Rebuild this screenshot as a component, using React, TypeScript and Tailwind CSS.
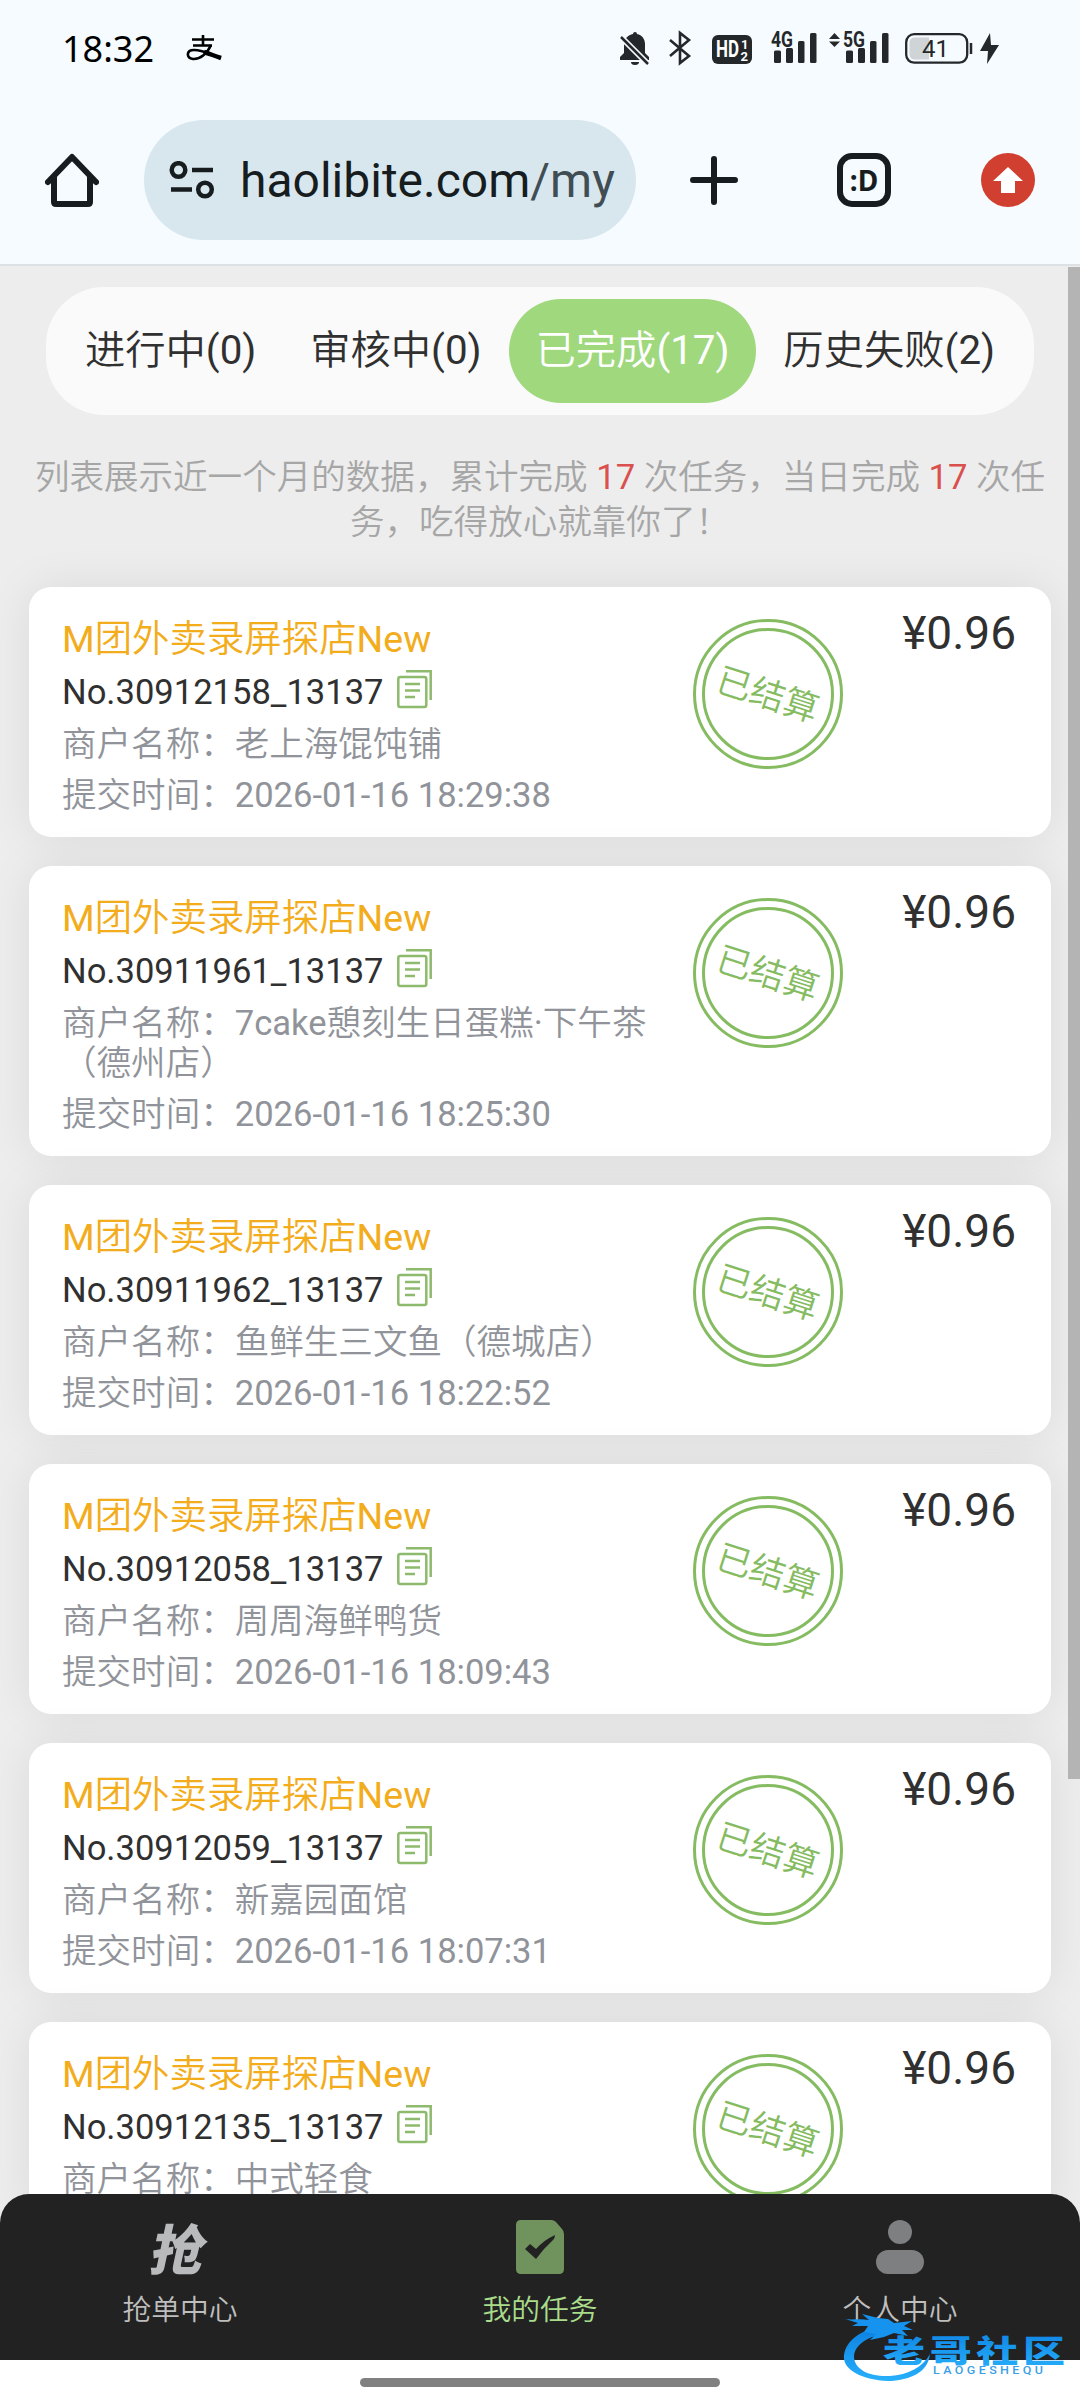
import { clsx } from "clsx";

type Task = {
  no: string;
  shop: string;
  time?: string;
};

const tabs = ["进行中(0)", "审核中(0)", "已完成(17)", "历史失败(2)"];
const activeTab = 2;

const tasks: Task[] = [
  { no: "30912158_13137", shop: "老上海馄饨铺", time: "2026-01-16 18:29:38" },
  { no: "30911961_13137", shop: "7cake憩刻生日蛋糕·下午茶（德州店）", time: "2026-01-16 18:25:30" },
  { no: "30911962_13137", shop: "鱼鲜生三文鱼（德城店）", time: "2026-01-16 18:22:52" },
  { no: "30912058_13137", shop: "周周海鲜鸭货", time: "2026-01-16 18:09:43" },
  { no: "30912059_13137", shop: "新嘉园面馆", time: "2026-01-16 18:07:31" },
  { no: "30912135_13137", shop: "中式轻食" },
];

function SignalIcon({ label }: { label: string }) {
  return (
    <svg className="overflow-visible" width="46" height="34" viewBox="0 0 46 34" fill="#25282a">
      <text x="0" y="17" fontSize="22" fontWeight="700" textLength="22" lengthAdjust="spacingAndGlyphs">
        {label}
      </text>
      <rect x="3" y="20.500" width="7" height="12.500" rx="1.500" />
      <rect x="15" y="18" width="7" height="15" rx="1.500" />
      <rect x="27" y="11" width="6.500" height="22" rx="1.500" />
      <rect x="39" y="3" width="6.500" height="30" rx="1.500" />
    </svg>
  );
}

function StatusBar() {
  return (
    <div className="flex h-[96px] items-start pt-[30px] pl-[62px] text-black">
      <span className="-mt-px w-[92px] font-['Noto_Sans','Noto_Sans_CJK_SC',sans-serif] text-[36px] leading-[40px]">
        18:32
      </span>
      <svg className="mt-[4px] ml-[32px]" width="36" height="30" viewBox="0 0 36 30" fill="none" stroke="#000">
        <path d="M6 5.500H28M7 11.500H26M17 1V11" strokeWidth="2.600" />
        <path d="M25 11C21 20 14 25.500 7 25C0 24 0 16 8 16C17 16 26 21 35 24" strokeWidth="2.600" />
        <path d="M18 18C24 20 29 22 35 24" strokeWidth="4.500" />
      </svg>
      <div className="ml-auto flex items-start pr-[80px]">
        <svg className="mt-px" width="32" height="36" viewBox="0 0 32 36">
          <path
            d="M14 3a2 2 0 0 1 4 0c5 1 8 5 8 10v9l4 4v3H1v-3l4-4v-9c0-5 4-9 9-10zM12 31h8a4 3 0 0 1-8 0z"
            fill="#25282a"
          />
          <path d="M1 5L29 33" stroke="#f5fbff" strokeWidth="6" />
          <path d="M2 6L29 33" stroke="#25282a" strokeWidth="2.500" />
        </svg>
        <svg className="ml-[17px]" width="24" height="36" viewBox="0 0 24 36" fill="none" stroke="#25282a" strokeWidth="2.600">
          <path d="M2 10L21 26L12 33V3L21 10L2 26" />
        </svg>
        <svg className="mt-[5px] ml-[20px]" width="40" height="29" viewBox="0 0 40 29">
          <rect width="40" height="29" rx="6" fill="#25282a" />
          <g fill="#fff" fontWeight="700">
            <text x="4" y="22" fontSize="23" textLength="23" lengthAdjust="spacingAndGlyphs">HD</text>
            <text x="29" y="14" fontSize="13">1</text>
            <text x="28.500" y="26" fontSize="13">2</text>
          </g>
        </svg>
        <div className="ml-[19px]">
          <SignalIcon label="4G" />
        </div>
        <svg className="mt-[3px] mr-[3px] ml-[12px]" width="11" height="14" viewBox="0 0 11 14" fill="#25282a">
          <path d="M0 6L5.500 0L11 6zM0 8.500L5.500 14L11 8.500z" />
        </svg>
        <SignalIcon label="5G" />
        <svg className="mt-[3px] ml-[16px]" width="95" height="32" viewBox="0 0 95 32">
          <rect x="1.200" y="1.200" width="61" height="28.500" rx="8" fill="none" stroke="#25282a" strokeWidth="2.300" />
          <path d="M10 4.500H24V26.500H10Q4.500 26.500 4.500 21V10Q4.500 4.500 10 4.500z" fill="#cfd4d7" />
          <text x="17" y="24" fontSize="24" fill="#25282a" textLength="27">41</text>
          <path d="M66 10V21" stroke="#25282a" strokeWidth="2.500" />
          <path d="M85 0L75 18H83L82 31L94 12H86z" fill="#25282a" />
        </svg>
      </div>
    </div>
  );
}

function BrowserBar() {
  return (
    <div className="flex h-[170px] items-start border-b-2 border-[#dde1e4] pt-[24px]">
      <svg className="mt-[33px] ml-[45px]" width="54" height="56" viewBox="0 0 54 56" fill="none" stroke="#171d1f" strokeWidth="6">
        <path d="M3 29L27 4L51 29" strokeLinecap="round" strokeLinejoin="round" />
        <path d="M9 24V49Q9 51 11 51H43Q45 51 45 49V24" />
      </svg>
      <div className="ml-[45px] flex h-[120px] w-[492px] items-center rounded-full bg-[#d8e7ee] pl-[25px]">
        <svg width="46" height="38" viewBox="0 0 46 38" fill="none" stroke="#171d1f" strokeWidth="4.500">
          <circle cx="9.500" cy="9" r="6.800" />
          <path d="M23 9H44M2 28.500H23" />
          <circle cx="36" cy="28.500" r="6.800" />
        </svg>
        <span className="mt-[2px] ml-[25px] text-[48px] leading-[60px] text-[#171d1f]">
          haolibite.com<span className="text-[#414d54]">/my</span>
        </span>
      </div>
      <svg className="mt-[36px] ml-[54px]" width="48" height="50" viewBox="0 0 48 50" stroke="#171d1f" strokeWidth="6" strokeLinecap="round">
        <path d="M24 3V46M3 24H45" />
      </svg>
      <div className="mt-[33px] ml-[99px] flex h-[54px] w-[54px] items-center justify-center rounded-[15px] border-6 border-[#171d1f] font-['Noto_Sans',sans-serif] text-[28px] leading-none font-bold text-[#171d1f]">
        :D
      </div>
      <svg className="mt-[33px] ml-[90px]" width="54" height="54" viewBox="0 0 54 54">
        <circle cx="27" cy="27" r="27" fill="#d03f2f" />
        <path d="M27 14L42 28H34V40H20V28H12z" fill="#fff" />
      </svg>
    </div>
  );
}

function CopyIcon() {
  return (
    <svg width="36" height="40" viewBox="0 0 36 40" fill="none" stroke="#8dba6c" strokeWidth="2.500">
      <rect x="1.300" y="8" width="28" height="30" rx="2" />
      <path d="M9 2.300H33.700V31" />
      <path d="M8 15H23M8 21.500H23M8 28H18" />
    </svg>
  );
}

function Stamp() {
  return (
    <div className="mt-[32px] h-[150px] w-[150px] shrink-0 rounded-full border-[3px] border-[#85bb61] p-[6px]">
      <div className="flex h-full w-full items-center justify-center rounded-full border-[3px] border-[#85bb61] pt-[3px]">
        <span className="rotate-[18deg] text-[35px] leading-none whitespace-nowrap text-[#85bb61]">已结算</span>
      </div>
    </div>
  );
}

function TaskCard({ task }: { task: Task }) {
  return (
    <div className="flex rounded-[22px] bg-white pr-[35px] pl-[33px] shadow-[0_0_46px_rgba(0,0,0,0.08)]">
      <div className="flex w-[602px] flex-col gap-[11px] pt-[30px] pb-[21px] text-[34.56px] text-[#909399]">
        <h3 className="text-[37.44px] leading-[44px] text-[#f2ac1c]">M团外卖录屏探店New</h3>
        <div className="flex h-[41px] items-center leading-[41px] text-[#303030]">
          No.{task.no}
          <span className="-mt-[8px] ml-[14px]">
            <CopyIcon />
          </span>
        </div>
        <p className="leading-[40px]">商户名称：{task.shop}</p>
        {task.time && <p className="leading-[41px]">提交时间：{task.time}</p>}
      </div>
      <div className="ml-[29px]">
        <Stamp />
      </div>
      <div className="ml-auto pt-[19px] text-[46px] leading-[54px] text-[#303030]">¥0.96</div>
    </div>
  );
}

function Watermark() {
  return (
    <svg className="absolute top-[2310px] left-[840px]" width="226" height="74" viewBox="0 0 226 74">
      <defs>
        <linearGradient id="wm" x1="0" y1="0" x2="0" y2="1">
          <stop offset="0" stopColor="#0c7fe0" />
          <stop offset="1" stopColor="#27b0fb" />
        </linearGradient>
      </defs>
      <path
        d="M40 17C18 20 3 34 4 49C6 63 28 71 52 71C72 69 88 62 90 44C83 57 68 65 50 66C30 67 14 60 14 46C15 35 27 26 46 24z"
        fill="url(#wm)"
      />
      <path
        d="M2 8C10 11 18 8 29 10L22 4L38 8L48 9L54 13L72 11L64 16L73 20L62 20L68 26L54 23L44 27L30 30L36 24L24 22L28 16L12 16L18 13z"
        fill="#1593ef"
      />
      <g transform="translate(43 52) scale(1 0.74)">
        <text
          fontSize="42"
          fontWeight="900"
          fill="url(#wm)"
          textLength="182"
          className="font-['Noto_Sans_CJK_SC',sans-serif]"
        >
          老哥社区
        </text>
      </g>
      <g transform="translate(93 64) scale(1.25 1)">
        <text fontSize="10" fontWeight="500" fill="#3c9fe6" textLength="88">
          LAOGESHEQU
        </text>
      </g>
    </svg>
  );
}

function BottomNav() {
  return (
    <nav className="grid h-[166px] shrink-0 grid-cols-3 rounded-t-[29px] bg-[#222] pt-[26px] text-center text-[28.8px] leading-[34px] text-[#bebebe]">
      <div className="flex flex-col items-center">
        <div className="h-[54px] -skew-x-12 font-['Noto_Sans_CJK_SC',sans-serif] text-[54px] leading-[54px] font-black text-[#b9babc]">
          抢
        </div>
        <span className="mt-[19px]">抢单中心</span>
      </div>
      <div className="flex flex-col items-center text-[#a9dc8b]">
        <svg width="48" height="54" viewBox="0 0 48 54">
          <path d="M5 0H35Q38 0 40 2L46 9Q48 11 48 14V49Q48 54 43 54H5Q0 54 0 49V5Q0 0 5 0z" fill="#70925c" />
          <path d="M9 29L14 24L20 29Q28 20 39 15Q39 18 37 20Q28 28 20 39z" fill="#222" />
        </svg>
        <span className="mt-[19px]">我的任务</span>
      </div>
      <div className="flex flex-col items-center">
        <div className="h-[24px] w-[24px] rounded-full bg-[#7e7f81]" />
        <div className="mt-[6px] h-[24px] w-[48px] rounded-full bg-[#7e7f81]" />
        <span className="mt-[19px]">个人中心</span>
      </div>
    </nav>
  );
}

export default function App() {
  return (
    <div className="relative flex h-[2408px] w-[1080px] flex-col overflow-hidden bg-white font-['Roboto','Noto_Sans_CJK_SC_DemiLight','Noto_Sans_CJK_SC',sans-serif]">
      <header className="shrink-0 bg-[#f5fbff]">
        <StatusBar />
        <BrowserBar />
      </header>

      <main className="h-[1962px] shrink-0 overflow-hidden bg-[#ededed] pt-[21px]">
        <div className="mx-[46px] flex h-[128px] rounded-[58px] bg-[#fafafa] p-[12px] text-[40.32px] leading-[104px] text-[#303030]">
          {tabs.map((tab, i) => (
            <div
              key={tab}
              className={clsx("flex-auto text-center", i === activeTab && "rounded-full bg-[#a0d87e] text-white")}
            >
              {tab}
            </div>
          ))}
        </div>

        <p className="mt-[40px] text-center text-[34.56px] leading-[45px] whitespace-nowrap text-[#a6a6a6]">
          列表展示近一个月的数据，累计完成 <span className="text-[#d9504e]">17</span> 次任务，当日完成{" "}
          <span className="text-[#d9504e]">17</span> 次任
          <br />
          务，吃得放心就靠你了！
        </p>

        <div className="mx-[29px] mt-[42px] flex flex-col gap-[29px]">
          {tasks.map((task) => (
            <TaskCard key={task.no} task={task} />
          ))}
        </div>
      </main>

      <div className="-mt-[34px] shrink-0">
        <BottomNav />
      </div>
      <div className="mx-auto mt-[18px] h-[9px] w-[360px] rounded-full bg-[#808080]" />

      <div className="absolute top-[267px] right-0 h-[1512px] w-[12px] bg-[#b4b4b4]" />
      <Watermark />
    </div>
  );
}
